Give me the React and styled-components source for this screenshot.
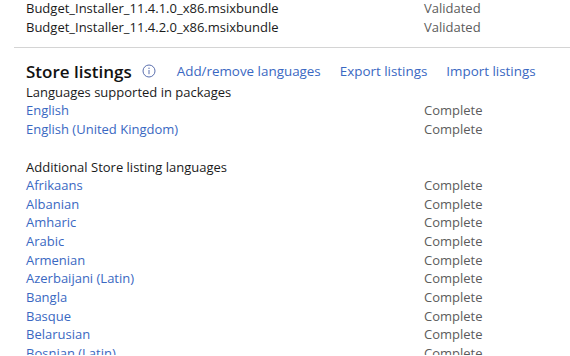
import React from "react";
import styled, { createGlobalStyle } from "styled-components";

const Global = createGlobalStyle`
  html, body { margin: 0; padding: 0; background: #fff; }
  body { font-family: "Segoe UI", "Open Sans", "Noto Sans", sans-serif; overflow: hidden; }
`;

const Page = styled.div`
  width: 570px;
  height: 356px;
  overflow: hidden;
  box-sizing: border-box;
  margin-top: -1px;
`;

const Section = styled.div`
  padding-left: 26px;
`;

const Row = styled.div`
  display: grid;
  grid-template-columns: 398px 1fr;
  font-size: 13px;
  line-height: 18.67px;
  height: 18.67px;
  white-space: nowrap;
`;

const Name = styled.span`
  color: ${(p) => (p.$link ? "#3a68c2" : "#1a1a1a")};
`;

const Status = styled.span`
  color: #5c5c5c;
`;

const Divider = styled.hr`
  margin: 11px 0 0 14px;
  border: 0;
  border-top: 1px solid #d4d4d4;
  height: 0;
`;

const HeaderBar = styled.div`
  display: flex;
  align-items: center;
  height: 24px;
  margin-top: 11px;
  padding-left: 26px;
  white-space: nowrap;
`;

const Title = styled.h2`
  margin: 0;
  font-size: 17px;
  font-weight: 600;
  color: #111;
`;

const Info = styled.svg`
  margin-left: 10px;
  margin-right: 21px;
  flex: none;
`;

const Links = styled.div`
  display: flex;
  gap: 19px;
`;

const Link = styled.a`
  color: #3a68c2;
  font-size: 13.4px;
  text-decoration: none;
`;

const Label = styled.div`
  font-size: 13px;
  line-height: 18px;
  height: 18px;
  color: #1a1a1a;
`;

const Spacer = styled.div`
  height: 19.5px;
`;

const files = [
  "Budget_Installer_11.4.1.0_x86.msixbundle",
  "Budget_Installer_11.4.2.0_x86.msixbundle",
];

const pkgLangs = ["English", "English (United Kingdom)"];
const extraLangs = [
  "Afrikaans",
  "Albanian",
  "Amharic",
  "Arabic",
  "Armenian",
  "Azerbaijani (Latin)",
  "Bangla",
  "Basque",
  "Belarusian",
  "Bosnian (Latin)",
];

export default function App() {
  return (
    <>
      <Global />
      <Page>
        <Section>
          {files.map((f) => (
            <Row key={f}>
              <Name>{f}</Name>
              <Status>Validated</Status>
            </Row>
          ))}
        </Section>
        <Divider />
        <HeaderBar>
          <Title>Store listings</Title>
          <Info width="14" height="14" viewBox="0 0 14 14">
            <circle cx="7" cy="7" r="6" fill="none" stroke="#5a6fae" strokeWidth="1" />
            <circle cx="7" cy="4.3" r="0.7" fill="#5a6fae" />
            <line x1="7" y1="6" x2="7" y2="10.2" stroke="#5a6fae" strokeWidth="1" />
          </Info>
          <Links>
            <Link href="#">Add/remove languages</Link>
            <Link href="#">Export listings</Link>
            <Link href="#">Import listings</Link>
          </Links>
        </HeaderBar>
        <Section>
          <Label>Languages supported in packages</Label>
          {pkgLangs.map((l) => (
            <Row key={l}>
              <Name $link>{l}</Name>
              <Status>Complete</Status>
            </Row>
          ))}
          <Spacer />
          <Label>Additional Store listing languages</Label>
          {extraLangs.map((l) => (
            <Row key={l}>
              <Name $link>{l}</Name>
              <Status>Complete</Status>
            </Row>
          ))}
        </Section>
      </Page>
    </>
  );
}
